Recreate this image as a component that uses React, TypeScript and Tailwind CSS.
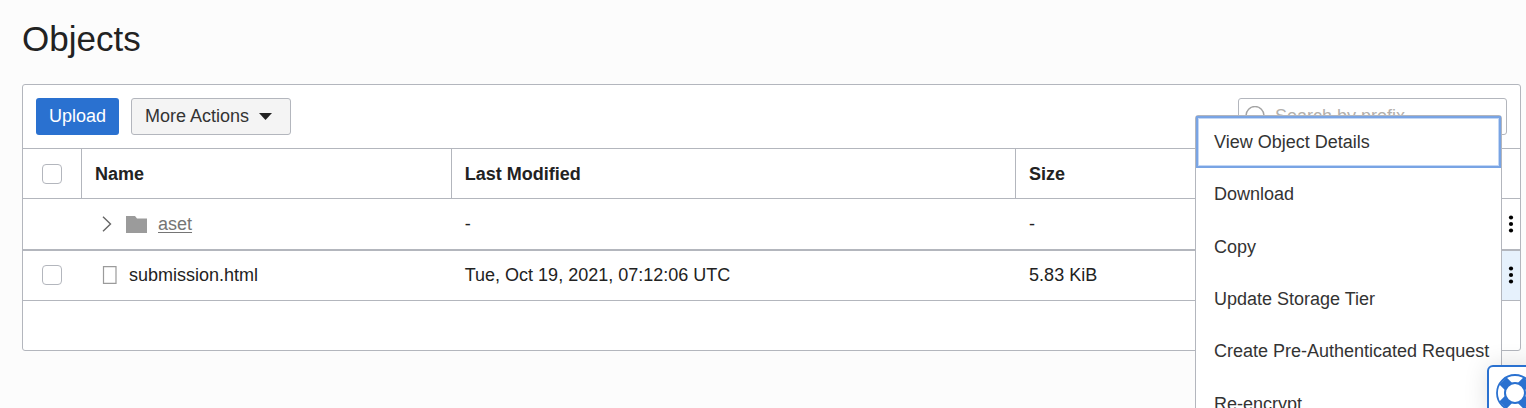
import React from "react";

const menuItems = [
  "View Object Details",
  "Download",
  "Copy",
  "Update Storage Tier",
  "Create Pre-Authenticated Request",
  "Re-encrypt",
];

function KebabIcon() {
  return (
    <svg width="6" height="18" viewBox="0 0 6 18" fill="#000" aria-hidden="true">
      <circle cx="3" cy="2.5" r="2.1" />
      <circle cx="3" cy="9" r="2.1" />
      <circle cx="3" cy="15.5" r="2.1" />
    </svg>
  );
}

function RowActions({ label }: { label: string }) {
  return (
    <button type="button" aria-label={label} className="flex h-6 w-full items-center justify-end pr-1.5">
      <KebabIcon />
    </button>
  );
}

function Tick({ label }: { label: string }) {
  return (
    <input
      type="checkbox"
      aria-label={label}
      className="mx-auto block size-5 appearance-none rounded-[4px] border border-[#b3b6bd] bg-white checked:bg-[#2a71d0]"
    />
  );
}

function LifebuoyIcon() {
  return (
    <svg width="38" height="38" viewBox="0 0 38 38" fill="none" stroke="#2a71d0" aria-hidden="true" className="shrink-0">
      <path d="M6.900 6.900L31.100 31.100M31.100 6.900L6.900 31.100" strokeWidth="10" />
      <circle cx="19" cy="19" r="10" fill="#fff" strokeWidth="2" />
      <circle cx="19" cy="19" r="18" strokeWidth="1.8" />
    </svg>
  );
}

export default function App() {
  return (
    <div className="relative min-h-screen overflow-hidden bg-[#fcfcfc] pr-[5px] pl-[22px] font-['Liberation_Sans',Arial,sans-serif] text-lg leading-6 text-[#222]">
      <h1 className="pt-[19px] pb-[25px] text-[35px] leading-10">Objects</h1>

      <section className="rounded-[3px] border border-[#b3b6bd] bg-white">
        <div className="flex items-start gap-3 border-b border-[#b3b6bd] p-[13px]">
          <button type="button" className="h-[37px] rounded-[3px] bg-[#2a71d0] px-[13px] pb-0.5 text-white">
            Upload
          </button>
          <button
            type="button"
            className="flex h-[37px] items-center gap-2.5 rounded-[3px] border border-[#b3b6bd] bg-[#f4f4f4] pr-[18px] pl-[13px] text-[#333]"
          >
            <span className="pb-0.5">More Actions</span>
            <svg width="13" height="7" viewBox="0 0 13 7" fill="#222" aria-hidden="true">
              <path d="M0 0h13L6.5 7z" />
            </svg>
          </button>
          <label className="ml-auto flex h-[37px] w-[269px] items-center gap-2.5 rounded-[3px] border border-[#b3b6bd] bg-white pl-1.5">
            <svg width="20" height="22" viewBox="0 0 20 22" fill="none" stroke="#a3a3a3" strokeWidth="1.4" aria-hidden="true">
              <circle cx="10" cy="9.5" r="9" />
              <path d="M16 16l4 5" />
            </svg>
            <input
              type="text"
              aria-label="Search by prefix"
              placeholder="Search by prefix"
              className="min-w-0 flex-1 bg-transparent pb-0.5 outline-none placeholder:text-[#b3b0ab]"
            />
          </label>
        </div>

        <table className="w-full table-fixed border-separate border-spacing-0 text-left">
          <colgroup>
            <col className="w-[59px]" />
            <col className="w-[24.7%]" />
            <col className="w-[37.7%]" />
            <col />
            <col className="w-12" />
          </colgroup>
          <thead>
            <tr className="h-[50px] *:border-b *:border-[#b3b6bd]">
              <th className="border-r p-0">
                <Tick label="Select all objects" />
              </th>
              <th className="border-r px-[13px] py-0">Name</th>
              <th className="border-r px-[13px] py-0">Last Modified</th>
              <th className="border-r px-[13px] py-0">Size</th>
              <td className="p-0" />
            </tr>
          </thead>
          <tbody>
            <tr className="h-[52px] *:border-b-2 *:border-[#b3b6bd]">
              <td className="p-0" />
              <td className="px-[13px] py-0">
                <div className="flex items-center">
                  <button type="button" aria-label="Expand aset" className="ml-[7px]">
                    <svg width="10" height="16" viewBox="0 0 10 16" fill="none" stroke="#666" strokeWidth="1.4" aria-hidden="true">
                      <path d="M1 .8L8.5 8 1 15.2" />
                    </svg>
                  </button>
                  <svg width="21" height="17" viewBox="0 0 21 17" fill="#9b9b9b" aria-hidden="true" className="ml-3.5">
                    <path d="M0 0h9l2 2.500h10V17H0z" />
                  </svg>
                  <a href="#aset" className="ml-[11px] text-[#757575] underline underline-offset-2">
                    aset
                  </a>
                </div>
              </td>
              <td className="px-[13px] py-0">-</td>
              <td className="px-[13px] py-0">-</td>
              <td className="p-0">
                <RowActions label="Actions for aset" />
              </td>
            </tr>
            <tr className="h-[50px] *:border-b *:border-[#b3b6bd] *:pt-0 *:pb-0.5">
              <td className="pr-px pl-0">
                <Tick label="Select submission.html" />
              </td>
              <td className="px-[13px]">
                <div className="flex items-center gap-3 pl-[7px]">
                  <svg width="15" height="18" viewBox="0 0 15 18" fill="none" stroke="#9b9b9b" strokeWidth="1.2" aria-hidden="true">
                    <path d="M1.500.6h12.500v16.800h-12.500z" />
                  </svg>
                  submission.html
                </div>
              </td>
              <td className="px-[13px]">Tue, Oct 19, 2021, 07:12:06 UTC</td>
              <td className="px-[13px]">5.83 KiB</td>
              <td className="bg-[#e6f1fc] px-0">
                <RowActions label="Actions for submission.html" />
              </td>
            </tr>
          </tbody>
        </table>
        <div className="h-[49px]" />
      </section>

      <div
        role="menu"
        className="absolute top-[115px] right-6 grid h-[316px] w-[307px] grid-cols-1 grid-rows-6 rounded-[3px] border border-[#b3b6bd] bg-white whitespace-nowrap text-[#333]"
      >
        {menuItems.map((item, index) => (
          <button
            key={item}
            type="button"
            role="menuitem"
            className={
              index === 0
                ? "border-2 border-[#79a4e4] px-4 text-left shadow-[inset_0_0_0_1px_#c3d7f5]"
                : "px-[18px] text-left"
            }
          >
            {item}
          </button>
        ))}
      </div>

      <button
        type="button"
        aria-label="Help"
        className="fixed -right-3 -bottom-3 flex h-[55px] w-[51px] items-start rounded-md border-2 border-[#2a71d0] bg-white pt-[7px] pl-[7px] shadow-[0_0_24px_rgba(0,0,0,0.12)]"
      >
        <LifebuoyIcon />
      </button>
    </div>
  );
}
